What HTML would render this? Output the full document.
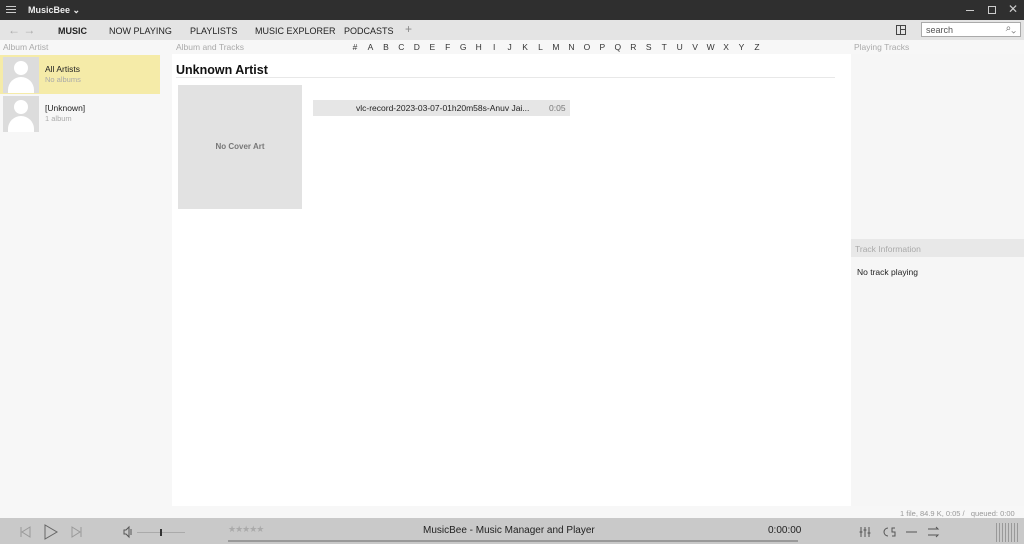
<!DOCTYPE html><html><head><style>
*{margin:0;padding:0;box-sizing:border-box}
body{width:1024px;height:544px;overflow:hidden;font-family:"Liberation Sans",sans-serif;font-size:9px;color:#222;background:#f7f7f7;position:relative}
.a{position:absolute}
.hdr{color:#aaa;font-size:8.5px}
.L{position:absolute;width:12px;text-align:center}
</style></head><body>
<div class="a" style="left:0;top:0;width:1024px;height:20px;background:#2f2f2f"></div>
<div class="a" style="left:6px;top:6px;width:10px;height:1px;background:#ccc;box-shadow:0 3px 0 #ccc,0 6px 0 #ccc"></div>
<div class="a" style="left:28px;top:5px;color:#eee;font-weight:bold;font-size:9px">MusicBee ⌄</div>
<div class="a" style="left:966px;top:10px;width:8px;height:1px;background:#ccc"></div>
<div class="a" style="left:988px;top:6px;width:8px;height:8px;border:1px solid #ccc"></div>
<div class="a" style="left:1008px;top:2px;color:#ccc;font-size:12px">✕</div>
<div class="a" style="left:0;top:20px;width:1024px;height:20px;background:#e4e4e4"></div>
<div class="a" style="left:8px;top:23px;color:#aaa;font-size:12px">← →</div>
<div class="a" style="left:58px;top:26px;font-weight:bold">MUSIC</div>
<div class="a" style="left:109px;top:26px">NOW PLAYING</div>
<div class="a" style="left:190px;top:26px">PLAYLISTS</div>
<div class="a" style="left:255px;top:26px">MUSIC EXPLORER</div>
<div class="a" style="left:344px;top:26px">PODCASTS</div>
<div class="a" style="left:405px;top:22px;color:#888;font-size:12px">+</div>
<div class="a" style="left:896px;top:25px;width:10px;height:10px;border:1px solid #444"><div style="position:absolute;left:3px;top:0;width:1px;height:8px;background:#444"></div><div style="position:absolute;left:3px;top:3px;width:6px;height:1px;background:#444"></div></div>
<div class="a" style="left:921px;top:22px;width:100px;height:15px;background:#fff;border:1px solid #aaa;padding:2px 4px;color:#555">search<span style="position:absolute;right:4px;top:0;font-size:10px;color:#666">⌕⌄</span></div>
<div class="a hdr" style="left:3px;top:42px">Album Artist</div>
<div class="a hdr" style="left:176px;top:42px">Album and Tracks</div>
<div class="a hdr" style="left:854px;top:42px">Playing Tracks</div>
<div class="a" style="left:349px;top:42px;font-size:8.5px;color:#333;width:420px">
<script>document.write("#ABCDEFGHIJKLMNOPQRSTUVWXYZ".split("").map((c,i)=>'<span class="L" style="left:'+(i*15.46)+'px">'+c+'</span>').join(''))</script></div>
<div class="a" style="left:172px;top:54px;width:679px;height:452px;background:#fff"></div>
<div class="a" style="left:851px;top:54px;width:173px;height:452px;background:#f6f6f6"></div>
<div class="a" style="left:0;top:55px;width:160px;height:39px;background:#f5eba8"></div>
<div class="a" style="left:3px;top:57px;width:36px;height:36px;background:#dcdcdc;overflow:hidden"><div style="position:absolute;left:11px;top:4px;width:14px;height:14px;border-radius:50%;background:#fff"></div><div style="position:absolute;left:5px;top:20px;width:26px;height:20px;border-radius:13px 13px 0 0;background:#fff"></div></div>
<div class="a" style="left:45px;top:64px;font-size:8.5px">All Artists</div>
<div class="a" style="left:45px;top:75px;font-size:7.5px;color:#aaa">No albums</div>
<div class="a" style="left:3px;top:96px;width:36px;height:36px;background:#dcdcdc;overflow:hidden"><div style="position:absolute;left:11px;top:4px;width:14px;height:14px;border-radius:50%;background:#fff"></div><div style="position:absolute;left:5px;top:20px;width:26px;height:20px;border-radius:13px 13px 0 0;background:#fff"></div></div>
<div class="a" style="left:45px;top:103px;font-size:8.5px">[Unknown]</div>
<div class="a" style="left:45px;top:114px;font-size:7.5px;color:#aaa">1 album</div>
<div class="a" style="left:176px;top:63px;font-size:12.5px;font-weight:bold;color:#111">Unknown Artist</div>
<div class="a" style="left:176px;top:77px;width:659px;height:1px;background:#e8e8e8"></div>
<div class="a" style="left:178px;top:85px;width:124px;height:124px;background:#e2e2e2;color:#777;font-weight:bold;font-size:8px;text-align:center;line-height:124px">No Cover Art</div>
<div class="a" style="left:313px;top:100px;width:257px;height:16px;background:#e6e6e6;font-size:8.5px;line-height:16px"><span style="position:absolute;left:43px">vlc-record-2023-03-07-01h20m58s-Anuv Jai...</span><span style="position:absolute;left:236px;color:#777">0:05</span></div>
<div class="a" style="left:851px;top:239px;width:173px;height:18px;background:#e8e8e8;color:#aaa;font-size:8.5px;padding:5px 4px">Track Information</div>
<div class="a" style="left:857px;top:267px;font-size:8.5px">No track playing</div>
<div class="a" style="left:900px;top:509px;font-size:7.5px;color:#999">1 file, 84.9 K, 0:05 / &nbsp;&nbsp;queued: 0:00</div>
<div class="a" style="left:0;top:518px;width:1024px;height:26px;background:#c9c9c9"></div>
<svg class="a" style="left:0;top:518px" width="200" height="26" fill="none" stroke-width="1">
<path d="M21 9v10M30 9l-8 5 8 5z" stroke="#999"/>
<path d="M45 7v14l12-7z" stroke="#666"/>
<path d="M72 9l8 5-8 5zM81 9v10" stroke="#999"/>
<path d="M124 12h2l3-3v10l-3-3h-2zM131 11v6" stroke="#555"/>
<path d="M137 14.5h48" stroke="#aaa"/>
<path d="M161 11v7" stroke="#333" stroke-width="2"/>
</svg>
<div class="a" style="left:228px;top:524px;color:#aaa;font-size:9px;letter-spacing:-1px">★★★★★</div>
<div class="a" style="left:228px;top:540px;width:570px;height:2px;background:#999"></div>
<div class="a" style="left:423px;top:525px;font-size:10px;color:#222">MusicBee - Music Manager and Player</div>
<div class="a" style="left:768px;top:525px;font-size:10px;color:#222">0:00:00</div>
<svg class="a" style="left:850px;top:518px" width="100" height="26" fill="none" stroke="#555">
<path d="M11 9v10M15 9v10M19 9v10M9.5 14h3M13.5 12h3M17.5 15h3"/>
<path d="M38 10a4 4 0 1 0 0 8M45 10h-3v4h3v4h-3"/>
<path d="M56 14h11"/>
<path d="M78 11h10l-2-2M78 17h10l-2 2"/>
</svg>
<div class="a" style="left:996px;top:523px;width:22px;height:19px;background:repeating-linear-gradient(90deg,#999 0 1px,transparent 1px 3px)"></div>
</body></html>
